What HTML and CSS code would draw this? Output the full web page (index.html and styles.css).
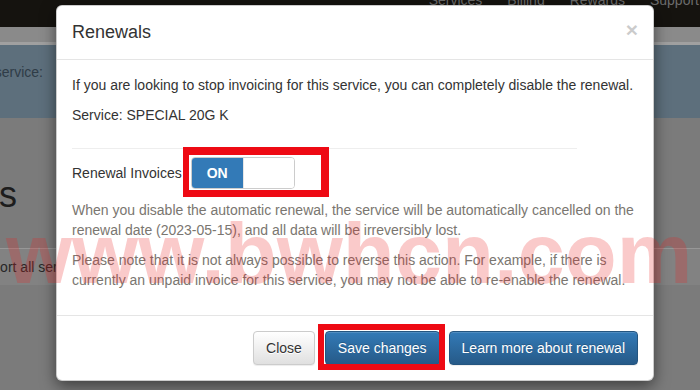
FILE: index.html
```html
<!DOCTYPE html>
<html lang="en">
<head>
    <meta charset="UTF-8">
    <meta name="viewport" content="width=device-width, initial-scale=1.0">
    <title>Renewals</title>
    <link rel="stylesheet" href="styles.css">
</head>
<body>
    <!-- page behind the modal, already dimmed -->
    <div class="page">
        <header class="topnav">
            <span>Services</span>
            <span>Billing</span>
            <span>Rewards</span>
            <span>Support</span>
        </header>
        <div class="subbar"></div>
        <div class="info-panel">
            <div class="clip clip-info"><span>Please choose a service:</span></div>
        </div>
        <div class="clip clip-title"><h1>Services</h1></div>
        <div class="toolbar">
            <span class="export">Export all services</span>
        </div>
    </div>

    <div class="modal">
        <div class="modal-header">
            <h4 class="modal-title">Renewals</h4>
            <button class="close" type="button">&times;</button>
        </div>
        <div class="modal-body">
            <p>If you are looking to stop invoicing for this service, you can completely disable the renewal.</p>
            <p>Service: SPECIAL 20G K</p>
            <hr>
            <div class="form-row">
                <label>Renewal Invoices</label>
                <span class="mark mark-switch">
                    <span class="switch">
                        <span class="switch-on">ON</span>
                        <span class="switch-handle"></span>
                    </span>
                </span>
            </div>
            <p class="muted">When you disable the automatic renewal, the service will be automatically cancelled on the renewal date (2023-05-15), and all data will be irreversibly lost.</p>
            <p class="muted">Please note that it is not always possible to reverse this action. For example, if there is currently an unpaid invoice for this service, you may not be able to re-enable the renewal.</p>
        </div>
        <div class="modal-footer">
            <button class="btn btn-default" type="button">Close</button>
            <span class="mark mark-save"><button class="btn btn-primary" type="button">Save changes</button></span>
            <button class="btn btn-primary" type="button">Learn more about renewal</button>
        </div>
    </div>

    <div class="watermark">www.bwhcn.com</div>
</body>
</html>
```

FILE: styles.css
```css
* {
    box-sizing: border-box;
}

body {
    margin: 0;
    width: 700px;
    height: 390px;
    overflow: hidden;
    position: relative;
    font-family: "Liberation Sans", Arial, Helvetica, sans-serif;
    font-size: 14px;
    line-height: 20px;
    color: #333;
    background: #7b7b7b;
}

/* ---- dimmed page ---- */

.page {
    height: 100%;
}

.topnav {
    height: 27px;
    background: #15130f;
    display: flex;
    justify-content: flex-end;
    gap: 25px;
    padding-right: 1px;
    overflow: hidden;
    color: #6c6c6c;
}

.topnav span {
    margin-top: -10px;
}

.subbar {
    height: 18px;
    background: #8a8a8a;
    border-bottom: 3px solid #a0a0a0;
}

.info-panel {
    height: 73px;
    background: #5d6f7c;
    padding-top: 17px;
    color: #2f3c47;
}

.clip {
    display: flex;
    justify-content: flex-end;
    overflow: hidden;
    white-space: nowrap;
}

.clip-info {
    width: 43px;
}

.clip-title {
    width: 17px;
    margin-top: 57px;
}

.clip-title h1 {
    margin: 0;
    font-size: 36px;
    font-weight: 500;
    line-height: 40px;
    color: #1d1d1d;
}

.toolbar {
    margin-top: 33px;
    height: 37px;
    border-top: 1px solid #979797;
    background: #828282;
    padding-top: 8px;
    color: #272727;
    white-space: nowrap;
}

.export {
    display: inline-block;
    margin-left: -24px;
}

/* ---- modal ---- */

.modal {
    position: absolute;
    left: 56px;
    top: 5px;
    width: 598px;
    background: #fff;
    border: 1px solid rgba(0, 0, 0, 0.2);
    border-radius: 6px;
    box-shadow: 0 5px 15px rgba(0, 0, 0, 0.5);
}

.modal-header {
    display: flex;
    justify-content: space-between;
    align-items: flex-start;
    padding: 13px 15px 14px;
    border-bottom: 1px solid #e5e5e5;
}

.modal-title {
    margin: 0;
    font-size: 18px;
    font-weight: normal;
    line-height: 26px;
}

.close {
    background: none;
    border: none;
    padding: 0;
    margin-top: -2px;
    font-family: inherit;
    font-size: 21px;
    font-weight: bold;
    line-height: 26px;
    color: #000;
    opacity: 0.2;
    text-shadow: 0 1px 0 #fff;
}

.modal-body {
    padding: 15px;
}

.modal-body p {
    margin: 0 0 10px;
}

.modal-body hr {
    width: 505px;
    margin: 23px 0 8px;
    border: 0;
    border-top: 1px solid #eee;
}

.form-row {
    display: flex;
    align-items: center;
    gap: 9px;
    margin-bottom: 11px;
}

.muted {
    color: #7a7670;
}

.switch {
    display: flex;
    width: 104px;
    height: 32px;
    border: 1px solid #ccc;
    border-radius: 4px;
    overflow: hidden;
}

.switch-on {
    width: 51px;
    background: #337ab7;
    color: #fff;
    font-weight: bold;
    display: flex;
    align-items: center;
    justify-content: center;
}

.switch-handle {
    flex: 1;
    background: #fff;
    border-left: 1px solid #e6e6e6;
}

/* red annotation boxes drawn over the screenshot */
.mark {
    position: relative;
    display: inline-flex;
}

.mark::after {
    content: "";
    position: absolute;
    border: solid #ee0a14;
}

.mark-switch::after {
    left: -8px;
    top: -10px;
    right: -34px;
    bottom: -8px;
    border-width: 8px 8px 7px 6px;
}

.mark-save::after {
    left: -7px;
    top: -7px;
    right: -5px;
    bottom: -5px;
    border-width: 6px;
}

.modal-footer {
    display: flex;
    justify-content: flex-end;
    gap: 9px;
    padding: 15px;
    border-top: 1px solid #e5e5e5;
}

.btn {
    font-family: inherit;
    font-size: 14px;
    line-height: 20px;
    padding: 6px 12px;
    border: 1px solid transparent;
    border-radius: 4px;
    cursor: pointer;
}

.btn-default {
    margin-right: 1px;
    color: #333;
    background-image: linear-gradient(to bottom, #fff 0, #e0e0e0 100%);
    border-color: #ccc;
    text-shadow: 0 1px 0 #fff;
    box-shadow: inset 0 1px 0 rgba(255, 255, 255, 0.15), 0 1px 1px rgba(0, 0, 0, 0.075);
}

.btn-primary {
    color: #fff;
    background-image: linear-gradient(to bottom, #337ab7 0, #265a88 100%);
    border-color: #245580;
    text-shadow: 0 -1px 0 rgba(0, 0, 0, 0.2);
    box-shadow: inset 0 1px 0 rgba(255, 255, 255, 0.15), 0 1px 1px rgba(0, 0, 0, 0.075);
}

/* watermark over everything */
.watermark {
    position: absolute;
    left: 6px;
    top: 211px;
    font-size: 85px;
    font-weight: bold;
    line-height: 85px;
    white-space: nowrap;
    color: rgba(235, 35, 35, 0.24);
    pointer-events: none;
}
```
